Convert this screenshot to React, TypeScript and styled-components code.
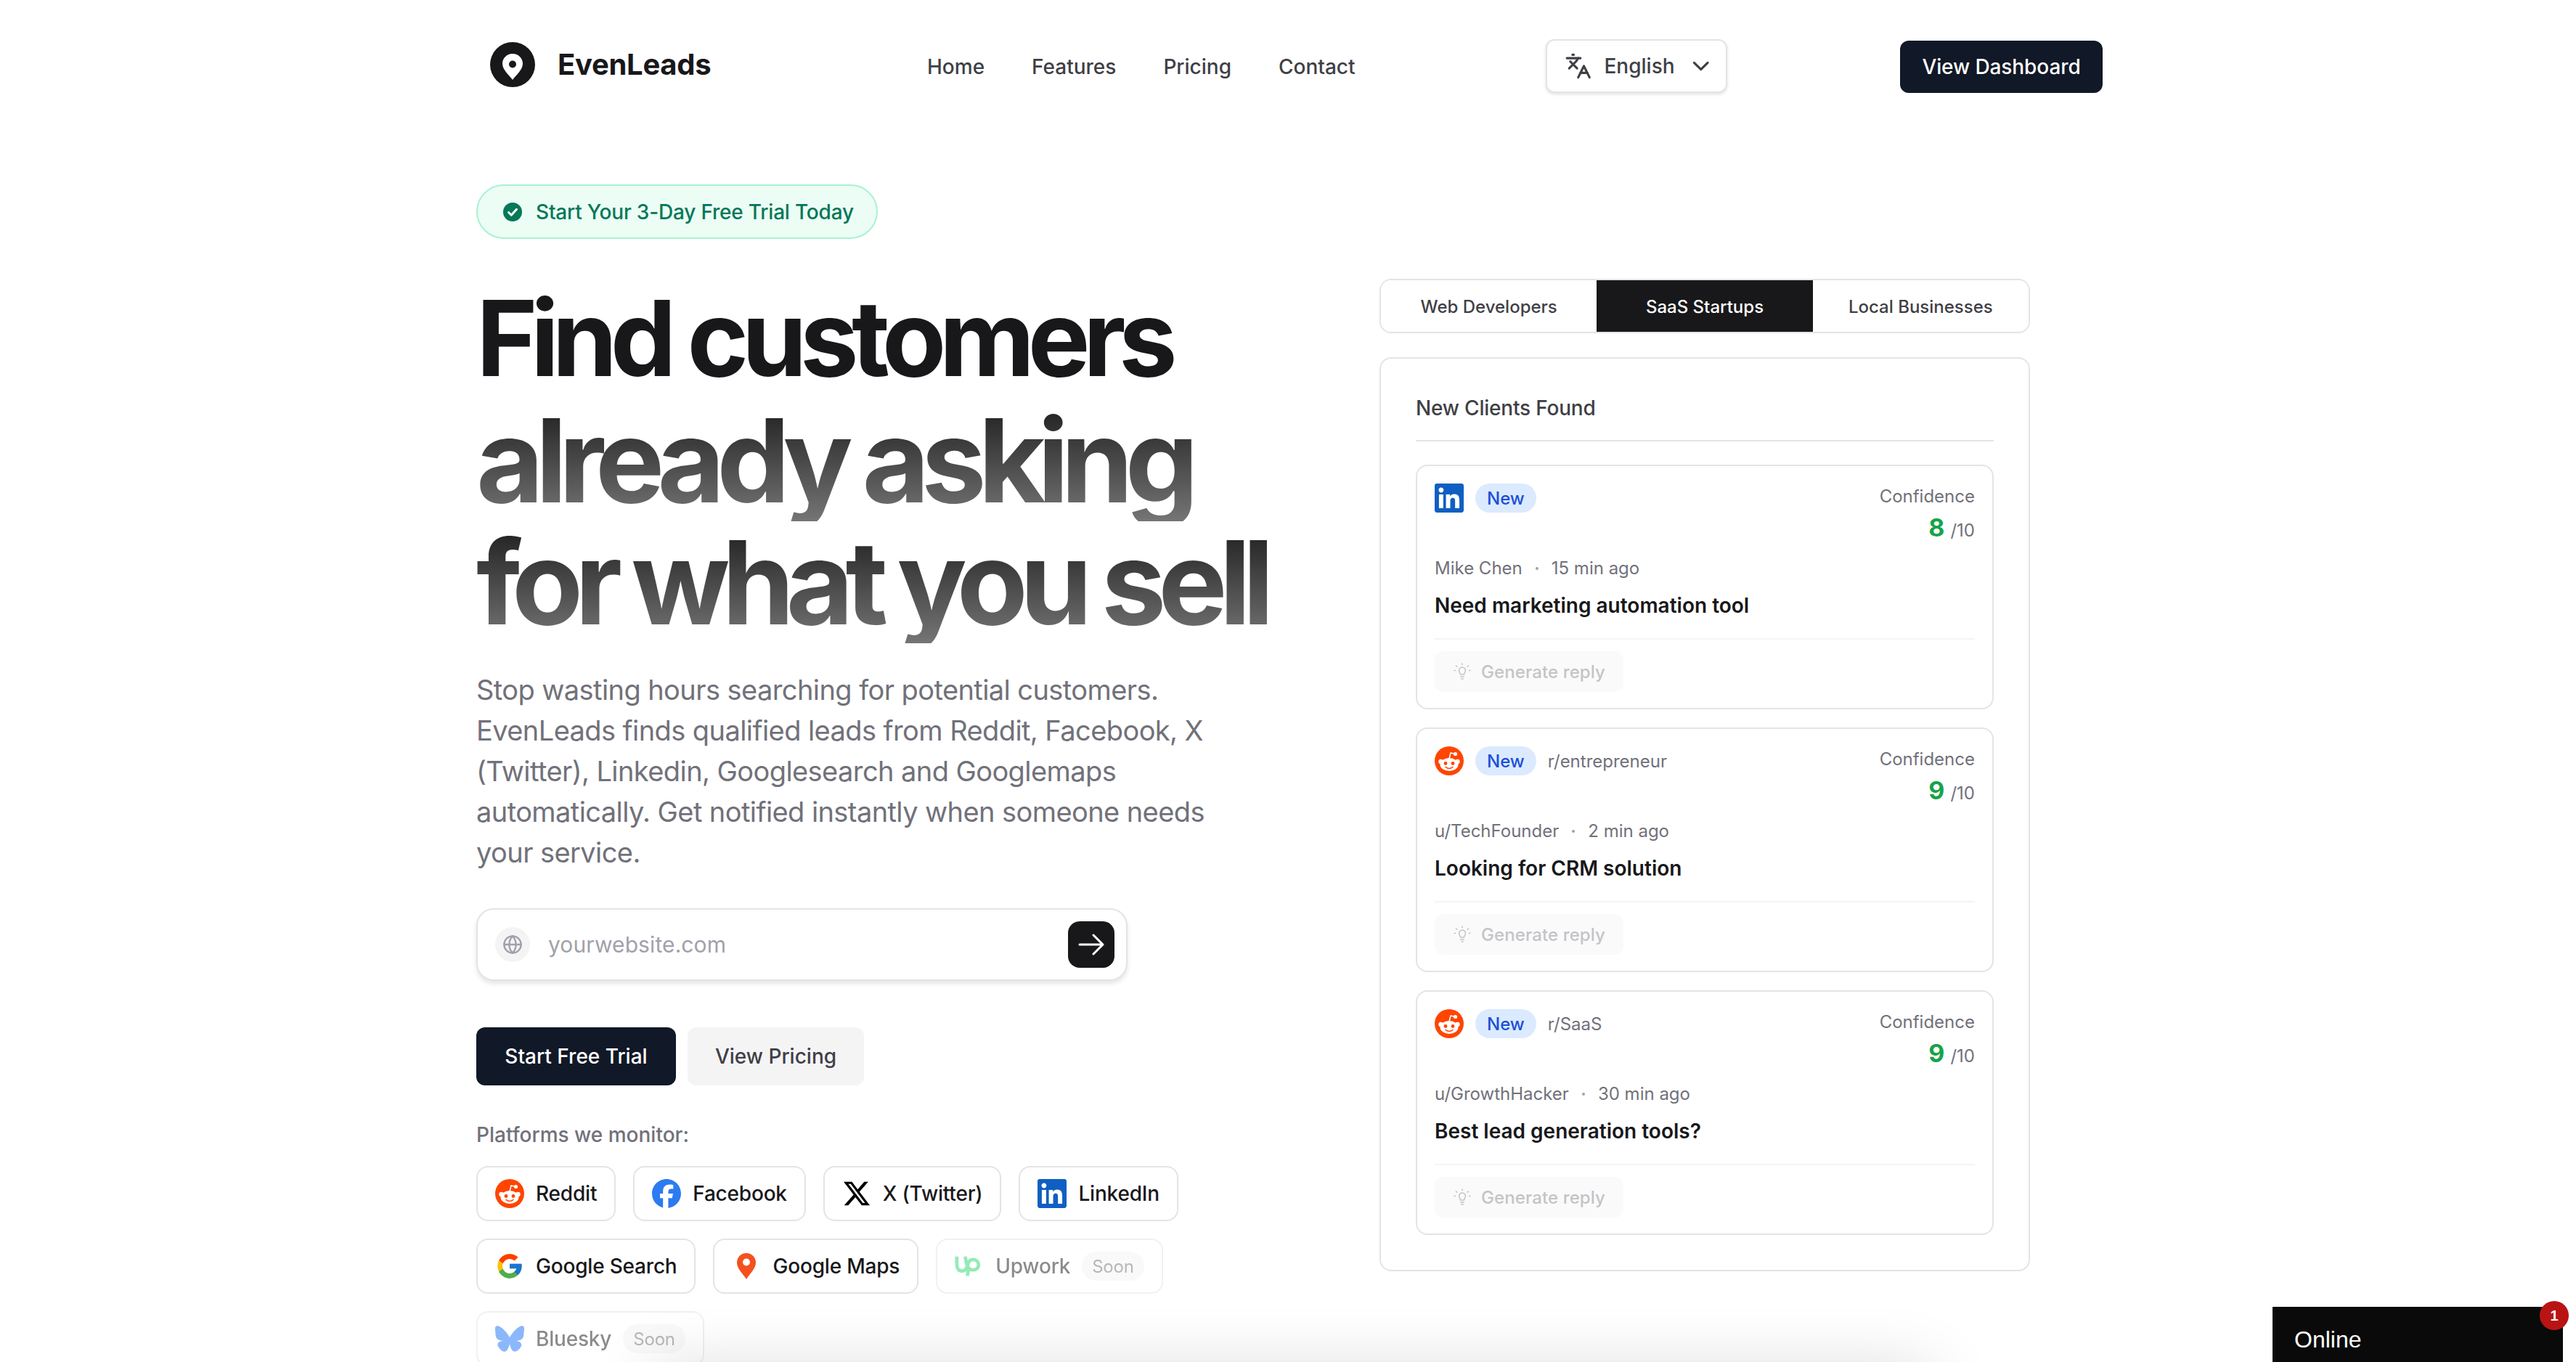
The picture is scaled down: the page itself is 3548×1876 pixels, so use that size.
import React from "react";
import styled, { createGlobalStyle } from "styled-components";
import { Languages, ChevronDown, Globe } from "lucide-react";
import { SiFacebook, SiX, SiLinkedin, SiBluesky } from "react-icons/si";
import { FcGoogle } from "react-icons/fc";

const Global = createGlobalStyle`
  html, body { margin: 0; padding: 0; background: #fff; height: 100%; overflow: hidden; }
  body { font-family: Inter, "Liberation Sans", sans-serif; color: #18181b; }
  * { box-sizing: border-box; }
`;

const Page = styled.div`
  position: relative;
  width: 3548px;
  height: 1876px;
  overflow: hidden;
`;

const Header = styled.header`
  display: grid;
  grid-template-columns: 629px 852px 488px 279px;
  align-items: end;
  margin: 0 648px;
  padding-top: 54px;
  height: 128px;
`;

const Brand = styled.div`
  align-self: center;
  display: flex;
  align-items: center;
  gap: 30px;
  padding: 0 0 5px 26px;
  font-size: 40px;
  font-weight: 700;
  letter-spacing: -0.3px;
  color: #18181b;
`;

const Nav = styled.nav`
  display: flex;
  align-items: center;
  gap: 65px;
  height: 74px;
  padding-top: 2px;
`;

const NavLink = styled.a`
  font-size: 28px;
  font-weight: 500;
  color: #3f3f46;
`;

const LangButton = styled.div`
  width: 250px;
  height: 74px;
  display: flex;
  align-items: center;
  padding: 0 16px 0 24px;
  gap: 17px;
  border: 2px solid #e4e4e7;
  border-radius: 12px;
  background: #fff;
  box-shadow: 0 2px 4px rgba(0, 0, 0, 0.12);
  font-size: 28px;
  font-weight: 500;
  color: #3f3f46;
  span { flex: 1; }
`;

const Button = styled.div<{ $variant?: "dark" | "light" }>`
  display: inline-flex;
  align-items: center;
  justify-content: center;
  border-radius: 12px;
  font-size: 28px;
  font-weight: 500;
  background: ${(p) => (p.$variant === "light" ? "#f4f4f5" : "#111827")};
  color: ${(p) => (p.$variant === "light" ? "#3f3f46" : "#fff")};
`;

const DashButton = styled(Button)`
  height: 72px;
  width: 279px;
  letter-spacing: -0.1px;
`;

const Hero = styled.main`
  display: flex;
  margin: 126px 0 0 656px;
`;

const Left = styled.section`
  width: 1244px;
  flex: none;
`;

const TrialBadge = styled.div`
  display: inline-flex;
  align-items: center;
  gap: 18px;
  height: 75px;
  padding: 0 31px 0 34px;
  border: 2px solid #a7f3d0;
  border-radius: 999px;
  background: #ecfdf5;
  color: #047857;
  font-size: 28px;
  font-weight: 500;
  letter-spacing: -0.2px;
`;

const Title = styled.h1`
  margin: 53px 0 0;
  font-weight: 700;
  line-height: 168px;
`;

const TitleLine = styled.span<{ $fade?: boolean }>`
  display: block;
  width: fit-content;
  padding-right: 12px;
  font-size: ${(p) => (p.$fade ? 160 : 144)}px;
  letter-spacing: ${(p) => (p.$fade ? -11.2 : -9.5)}px;
  word-spacing: ${(p) => (p.$fade ? -3 : 0)}px;
  color: ${(p) => (p.$fade ? "transparent" : "#18181b")};
  background: ${(p) => (p.$fade ? "linear-gradient(180deg, #1c1c1c 0%, #757575 100%)" : "none")};
  -webkit-background-clip: text;
  background-clip: text;
`;

const Lead = styled.p`
  margin: 36px 0 0;
  max-width: 1008px;
  font-size: 38px;
  letter-spacing: -0.58px;
  line-height: 56px;
  color: #71717a;
`;

const UrlBox = styled.div`
  display: flex;
  align-items: center;
  width: 897px;
  height: 100px;
  margin-top: 49px;
  padding: 0 16px 0 24px;
  border: 2px solid #e4e4e7;
  border-radius: 24px;
  background: #fff;
  box-shadow: 0 4px 6px rgba(0, 0, 0, 0.1);
`;

const GlobeDisc = styled.div`
  width: 48px;
  height: 48px;
  border-radius: 50%;
  background: #f4f4f5;
  color: #a1a1aa;
  display: flex;
  align-items: center;
  justify-content: center;
`;

const Placeholder = styled.div`
  flex: 1;
  margin-left: 25px;
  font-size: 30px;
  letter-spacing: 0.1px;
  color: #a1a1aa;
`;

const GoButton = styled.div`
  width: 64px;
  height: 64px;
  border-radius: 16px;
  background: #18181b;
  color: #fff;
  display: flex;
  align-items: center;
  justify-content: center;
`;

const Actions = styled.div`
  display: flex;
  gap: 16px;
  margin-top: 64px;
`;

const ActionButton = styled(Button)<{ $w: number }>`
  height: 80px;
  width: ${(p) => p.$w}px;
`;

const MonitorLabel = styled.div`
  margin-top: 50px;
  font-size: 28px;
  line-height: 36px;
  font-weight: 500;
  color: #71717a;
`;

const ChipWrap = styled.div`
  display: flex;
  flex-wrap: wrap;
  gap: 24px;
  margin-top: 25px;
  width: 1000px;
`;

const Chip = styled.div<{ $soon?: boolean }>`
  display: inline-flex;
  align-items: center;
  gap: 16px;
  height: 76px;
  padding: 0 24px;
  border: 2px solid #e4e4e7;
  border-radius: 16px;
  background: #fff;
  font-size: 28px;
  font-weight: 500;
  letter-spacing: -0.2px;
  color: #18181b;
  opacity: ${(p) => (p.$soon ? 0.5 : 1)};
`;

const IconBox = styled.div<{ $s?: number }>`
  width: ${(p) => p.$s ?? 40}px;
  height: ${(p) => p.$s ?? 40}px;
  flex: none;
  display: flex;
  align-items: center;
  justify-content: center;
`;

const SoonPill = styled.span`
  display: inline-flex;
  align-items: center;
  height: 40px;
  padding: 0 14px;
  border-radius: 999px;
  background: #f4f4f5;
  font-size: 24px;
  font-weight: 400;
  color: #71717a;
`;

const Right = styled.aside`
  width: 896px;
  flex: none;
  margin-top: 130px;
`;

const Tabs = styled.div`
  display: grid;
  grid-template-columns: repeat(3, 1fr);
  height: 75px;
  border: 2px solid #e4e4e7;
  border-radius: 16px;
  overflow: hidden;
`;

const Tab = styled.div<{ $active?: boolean }>`
  display: flex;
  align-items: center;
  justify-content: center;
  padding-top: 1px;
  font-size: 24px;
  font-weight: 500;
  background: ${(p) => (p.$active ? "#18181b" : "#fff")};
  color: ${(p) => (p.$active ? "#fff" : "#3f3f46")};
`;

const Panel = styled.div`
  margin-top: 33px;
  padding: 48px 48px 48px;
  border: 2px solid #e4e4e7;
  border-radius: 16px;
  height: 1259px;
`;

const PanelTitle = styled.div`
  padding-bottom: 24px;
  border-bottom: 2px solid #e4e4e7;
  font-size: 28px;
  letter-spacing: -0.2px;
  line-height: 40px;
  font-weight: 500;
  color: #3f3f46;
`;

const LeadList = styled.div`
  display: flex;
  flex-direction: column;
  gap: 25px;
  margin-top: 32px;
`;

const LeadCard = styled.article`
  height: 337px;
  padding: 24px 24px 0;
  border: 2px solid #e4e4e7;
  border-radius: 16px;
`;

const CardTop = styled.div`
  display: flex;
  align-items: flex-start;
  justify-content: space-between;
  height: 88px;
`;

const CardMeta = styled.div`
  display: flex;
  align-items: center;
  gap: 16px;
  font-size: 24px;
  color: #71717a;
`;

const NewPill = styled.span`
  display: inline-flex;
  align-items: center;
  height: 40px;
  padding: 0 16px;
  border-radius: 999px;
  background: #dbeafe;
  color: #1d4ed8;
  font-size: 24px;
  font-weight: 500;
`;

const Confidence = styled.div`
  text-align: right;
  font-size: 24px;
  line-height: 36px;
  color: #71717a;
`;

const Score = styled.div`
  display: flex;
  align-items: baseline;
  justify-content: flex-end;
  gap: 8px;
  margin-top: 7px;
  b {
    font-size: 34px;
    font-weight: 700;
    color: #16a34a;
  }
`;

const Author = styled.div`
  display: flex;
  align-items: center;
  gap: 18px;
  margin-top: 13px;
  font-size: 24px;
  line-height: 32px;
  color: #71717a;
`;

const Dot = styled.i`
  width: 4px;
  height: 4px;
  border-radius: 50%;
  background: #a1a1aa;
`;

const Question = styled.div`
  margin-top: 15px;
  padding-bottom: 25px;
  border-bottom: 2px solid #f4f4f5;
  font-size: 28px;
  line-height: 40px;
  font-weight: 600;
  color: #18181b;
`;

const ReplyButton = styled.div`
  display: inline-flex;
  align-items: center;
  gap: 14px;
  height: 56px;
  width: 260px;
  margin-top: 16px;
  padding: 0 0 0 26px;
  border-radius: 12px;
  background: #fafafa;
  color: #c4c4c8;
  font-size: 24px;
  font-weight: 500;
  letter-spacing: 0.1px;
`;

const BottomGlow = styled.div`
  position: absolute;
  left: 900px;
  right: 888px;
  top: 1885px;
  height: 200px;
  box-shadow: 0 0 90px rgba(0, 0, 0, 0.15);
`;

const Online = styled.div`
  position: absolute;
  left: 3130px;
  top: 1800px;
  width: 400px;
  height: 76px;
  padding: 27px 0 0 30px;
  background: #0a0a0a;
  color: #fff;
  font-family: "Liberation Sans", Arial, sans-serif;
  font-size: 32px;
  line-height: 37px;
`;

const OnlineBadge = styled.span`
  position: absolute;
  top: -8px;
  right: -8px;
  width: 40px;
  height: 40px;
  border-radius: 50%;
  background: #b91414;
  font-size: 20px;
  font-weight: 700;
  line-height: 40px;
  text-align: center;
`;

const Logo = () => (
  <svg width="64" height="64" viewBox="0 0 64 64">
    <circle cx="32" cy="32" r="31" fill="#18181b" />
    <path d="M32 17c-7.800 0-14 6-14 13.500 0 9 9.500 16 14 22.500 4.500-6.500 14-13.500 14-22.500C46 23 39.800 17 32 17z" fill="#fff" />
    <circle cx="32" cy="31.500" r="5" fill="#18181b" />
  </svg>
);

const CheckDisc = () => (
  <svg width="28" height="28" viewBox="0 0 28 28">
    <circle cx="14" cy="14" r="13" fill="#047857" />
    <path d="M8.500 14.500l3.800 3.800 7.200-8" fill="none" stroke="#fff" strokeWidth="3" strokeLinecap="round" strokeLinejoin="round" />
  </svg>
);

const MapPin = () => (
  <svg width="26" height="36" viewBox="0 0 26 36">
    <path d="M13 0C5.800 0 0 5.700 0 13c0 8.800 9 16 13 23 4-7 13-14.200 13-23C26 5.700 20.200 0 13 0z" fill="#f4511e" />
    <circle cx="13" cy="12.500" r="5" fill="#fff" />
  </svg>
);

const RedditLogo = () => (
  <svg width="40" height="40" viewBox="0 0 40 40">
    <circle cx="20" cy="20" r="20" fill="#ff4500" />
    <circle cx="8.500" cy="21" r="3.200" fill="#fff" />
    <circle cx="31.500" cy="21" r="3.200" fill="#fff" />
    <ellipse cx="20" cy="25" rx="12.500" ry="9" fill="#fff" />
    <path d="M20 17l2-8 5.500 1.300" fill="none" stroke="#fff" strokeWidth="1.600" strokeLinecap="round" strokeLinejoin="round" />
    <circle cx="28.500" cy="10.500" r="2.600" fill="#fff" />
    <circle cx="15" cy="23.500" r="2.400" fill="#ff4500" />
    <circle cx="25" cy="23.500" r="2.400" fill="#ff4500" />
    <path d="M15 28.500c3 2.400 7 2.400 10 0" fill="none" stroke="#ff4500" strokeWidth="1.600" strokeLinecap="round" />
  </svg>
);

const UpworkLogo = () => (
  <svg width="42" height="32" viewBox="0 0 42 32">
    <path
      d="M3 2v12c0 5.500 3.200 9 7.500 9 4.800 0 6.800-3.800 8-8.500 1.100-4.700 3.600-8 8.200-8 4.400 0 7.800 3 7.800 7.500 0 4.600-3.400 7.500-7.800 7.500-3.700 0-6.700-2.200-9-6.500L15 2M20.500 18L18.200 30"
      fill="none"
      stroke="#2fd673"
      strokeWidth="5"
      strokeLinejoin="round"
    />
  </svg>
);

const LongArrow = () => (
  <svg width="36" height="30" viewBox="0 0 36 30" fill="none" stroke="currentColor" strokeWidth="3" strokeLinecap="round" strokeLinejoin="round">
    <path d="M2 15h32M21 2l13 13-13 13" />
  </svg>
);

const RayBulb = () => (
  <svg width="24" height="24" viewBox="0 0 24 24" fill="none" stroke="currentColor" strokeWidth="1.600" strokeLinecap="round" strokeLinejoin="round">
    <path d="M8 12.500a4.500 4.500 0 1 1 8 0c-.7 1-1.300 1.800-1.500 3.500h-5c-.2-1.700-.8-2.500-1.500-3.500zM9.800 19h4.400M10.800 22h2.400" />
    <path d="M12 1v1.500M3.500 4l1.200 1.200M20.500 4l-1.200 1.200M1 10.500h1.500M21.500 10.500H23" />
  </svg>
);

type P = { name: string; icon: React.ReactNode; soon?: boolean };

const platforms: P[] = [
  { name: "Reddit", icon: <RedditLogo /> },
  { name: "Facebook", icon: <SiFacebook size={40} color="#2d7bf0" /> },
  { name: "X (Twitter)", icon: <SiX size={36} color="#000" /> },
  { name: "LinkedIn", icon: <SiLinkedin size={40} color="#0f5fc2" /> },
  { name: "Google Search", icon: <FcGoogle size={40} /> },
  { name: "Google Maps", icon: <MapPin /> },
  { name: "Upwork", icon: <UpworkLogo />, soon: true },
  { name: "Bluesky", icon: <SiBluesky size={40} color="#1a73f8" />, soon: true },
];

const leads = [
  { net: "in", sub: "", score: 8, who: "Mike Chen", when: "15 min ago", q: "Need marketing automation tool" },
  { net: "re", sub: "r/entrepreneur", score: 9, who: "u/TechFounder", when: "2 min ago", q: "Looking for CRM solution" },
  { net: "re", sub: "r/SaaS", score: 9, who: "u/GrowthHacker", when: "30 min ago", q: "Best lead generation tools?" },
];

export default function App() {
  return (
    <Page>
      <Global />
      <Header>
        <Brand>
          <Logo />
          EvenLeads
        </Brand>
        <Nav>
          {["Home", "Features", "Pricing", "Contact"].map((n) => (
            <NavLink key={n}>{n}</NavLink>
          ))}
        </Nav>
        <LangButton>
          <Languages size={40} strokeWidth={2} />
          <span>English</span>
          <ChevronDown size={40} strokeWidth={2} />
        </LangButton>
        <DashButton>View Dashboard</DashButton>
      </Header>
      <Hero>
        <Left>
          <TrialBadge>
            <CheckDisc />
            Start Your 3-Day Free Trial Today
          </TrialBadge>
          <Title>
            <TitleLine>Find customers</TitleLine>
            <TitleLine $fade>already asking</TitleLine>
            <TitleLine $fade>for what you sell</TitleLine>
          </Title>
          <Lead>
            Stop wasting hours searching for potential customers. EvenLeads finds qualified leads from Reddit,
            Facebook, X (Twitter), Linkedin, Googlesearch and Googlemaps automatically. Get notified instantly
            when someone needs your service.
          </Lead>
          <UrlBox>
            <GlobeDisc>
              <Globe size={28} strokeWidth={2} />
            </GlobeDisc>
            <Placeholder>yourwebsite.com</Placeholder>
            <GoButton>
              <LongArrow />
            </GoButton>
          </UrlBox>
          <Actions>
            <ActionButton $w={275}>Start Free Trial</ActionButton>
            <ActionButton $w={243} $variant="light">View Pricing</ActionButton>
          </Actions>
          <MonitorLabel>Platforms we monitor:</MonitorLabel>
          <ChipWrap>
            {platforms.map((p) => (
              <Chip key={p.name} $soon={p.soon}>
                <IconBox>{p.icon}</IconBox>
                {p.name}
                {p.soon && <SoonPill>Soon</SoonPill>}
              </Chip>
            ))}
          </ChipWrap>
        </Left>
        <Right>
          <Tabs>
            <Tab>Web Developers</Tab>
            <Tab $active>SaaS Startups</Tab>
            <Tab>Local Businesses</Tab>
          </Tabs>
          <Panel>
            <PanelTitle>New Clients Found</PanelTitle>
            <LeadList>
              {leads.map((l) => (
                <LeadCard key={l.who}>
                  <CardTop>
                    <CardMeta>
                      <IconBox>
                        {l.net === "in" ? <SiLinkedin size={40} color="#0f5fc2" /> : <RedditLogo />}
                      </IconBox>
                      <NewPill>New</NewPill>
                      {l.sub && <span>{l.sub}</span>}
                    </CardMeta>
                    <Confidence>
                      Confidence
                      <Score>
                        <b>{l.score}</b>
                        <span>/10</span>
                      </Score>
                    </Confidence>
                  </CardTop>
                  <Author>
                    {l.who}
                    <Dot />
                    {l.when}
                  </Author>
                  <Question>{l.q}</Question>
                  <ReplyButton>
                    <RayBulb />
                    Generate reply
                  </ReplyButton>
                </LeadCard>
              ))}
            </LeadList>
          </Panel>
        </Right>
      </Hero>
      <BottomGlow />
      <Online>
        Online
        <OnlineBadge>1</OnlineBadge>
      </Online>
    </Page>
  );
}
